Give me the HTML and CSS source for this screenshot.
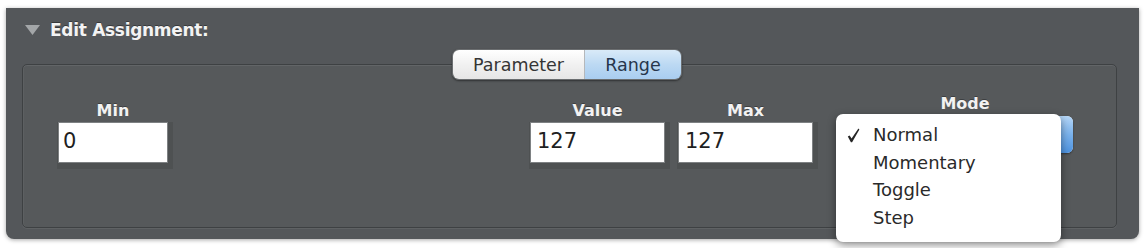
FILE: index.html
```html
<!DOCTYPE html>
<html>
<head>
<meta charset="utf-8">
<link rel="stylesheet" href="styles.css">
</head>
<body>
<div class="panel">
  <div class="header">
    <svg class="disclosure" width="15" height="10" viewBox="0 0 15 10"><path d="M0 0 H15 L7.5 10 Z" fill="#a3a6a8"/></svg>
    <span class="title">Edit Assignment:</span>
  </div>
  <div class="box">
    <div class="seg-row">
      <div class="segmented">
        <div class="seg seg-param">Parameter</div>
        <div class="seg seg-range">Range</div>
      </div>
    </div>
    <div class="fields">
      <div class="col col-min">
        <div class="label">Min</div>
        <div class="field field-min">0</div>
      </div>
      <div class="col col-value">
        <div class="label">Value</div>
        <div class="field field-wide">127</div>
      </div>
      <div class="col col-max">
        <div class="label">Max</div>
        <div class="field field-wide">127</div>
      </div>
      <div class="col col-mode">
        <div class="label">Mode</div>
        <div class="popup"><div class="popup-arrow"></div></div>
        <div class="menu">
          <div class="item"><svg class="check" width="13" height="15" viewBox="0 0 13 15"><path d="M0.8 8.6 L2.6 7.4 L4.6 10.6 L11.4 0.6 L12.4 1.4 L5.1 14.2 L3.9 14.2 Z" fill="#262626"/></svg>Normal</div>
          <div class="item">Momentary</div>
          <div class="item">Toggle</div>
          <div class="item">Step</div>
        </div>
      </div>
    </div>
  </div>
</div>
</body>
</html>
```
FILE: styles.css
```css
html, body {
  margin: 0;
  padding: 0;
  background: #ffffff;
}
body {
  font-family: "DejaVu Sans", "Liberation Sans", sans-serif;
  width: 1145px;
  height: 248px;
  overflow: hidden;
}
.panel {
  margin: 8px 6px 0 6px;
  height: 231px;
  box-sizing: border-box;
  background: #54575a;
  border-radius: 0 0 8px 8px;
  box-shadow: 0 1px 4px rgba(0,0,0,0.35);
  padding: 0 22px 0 16px;
}
.header {
  height: 44px;
  display: flex;
  align-items: center;
  padding-left: 3px;
}
.disclosure {
  display: block;
  margin-right: 10px;
}
.title {
  color: #f3f3f3;
  font-weight: bold;
  font-size: 17px;
  letter-spacing: -0.3px;
  text-shadow: 0 -1px 0 rgba(0,0,0,0.35);
}
.box {
  margin-top: 12px;
  height: 164px;
  box-sizing: border-box;
  border: 1px solid #3e4143;
  border-radius: 5px;
  background: #56595b;
  box-shadow: inset 0 1px 0 #626567, inset 1px 0 0 #5d6062, 0 1px 0 #5f6264;
}
.seg-row {
  display: flex;
  justify-content: center;
  margin-top: -16px;
  padding-right: 5px;
}
.segmented {
  display: flex;
  height: 29px;
  border-radius: 7px;
  overflow: hidden;
  border: 1px solid #6b6e70;
  box-shadow: 0 1px 2px rgba(0,0,0,0.45);
}
.seg {
  display: flex;
  align-items: center;
  justify-content: center;
  font-size: 17.5px;
  height: 100%;
}
.seg-param {
  width: 131px;
  color: #353535;
  background: linear-gradient(#ffffff, #f1f1f1 50%, #e6e6e6);
  border-right: 1px solid #b5b8bb;
}
.seg-range {
  width: 96px;
  color: #27364c;
  background: linear-gradient(#d9eaf8, #bcd9f3 50%, #a9cdf0);
}
.fields {
  display: flex;
  align-items: flex-start;
  padding-left: 35px;
  margin-top: 21px;
}
.col {
  display: flex;
  flex-direction: column;
  align-items: center;
  position: relative;
}
.label {
  color: #f2f2f2;
  font-weight: bold;
  font-size: 16px;
  line-height: 19px;
  height: 19px;
  margin-bottom: 2px;
  text-shadow: 0 -1px 0 rgba(0,0,0,0.3);
}
.field {
  box-sizing: border-box;
  height: 41px;
  background: #ffffff;
  border: 1px solid #7e8183;
  color: #1f1f1f;
  font-size: 21px;
  line-height: 36px;
  padding-left: 4px;
  align-self: stretch;
  box-shadow: 2px 3px 0 3px rgba(0,0,0,0.09);
}
.col-min { width: 110px; }
.col-value { width: 135px; margin-left: 362px; }
.col-max { width: 135px; margin-left: 13px; }
.field-wide { padding-left: 6px; }
.col-mode {
  width: 216px;
  margin-left: 44px;
  margin-top: -7px;
}
.popup {
  margin-top: 1px;
  align-self: stretch;
  height: 37px;
  border-radius: 6px;
  background: #f4f4f4;
  position: relative;
  overflow: hidden;
  box-shadow: 0 1px 2px rgba(0,0,0,0.4);
}
.popup-arrow {
  position: absolute;
  right: 0;
  top: 0;
  bottom: 0;
  width: 22px;
  background: linear-gradient(#b5d6f7, #7ab2ec 50%, #4e93e0);
}
.menu {
  position: absolute;
  left: -21px;
  top: 20px;
  width: 225px;
  height: 128px;
  box-sizing: border-box;
  background: #ffffff;
  border-radius: 7px;
  box-shadow: 0 3px 8px rgba(0,0,0,0.45);
  padding-top: 7px;
}
.item {
  position: relative;
  height: 27.5px;
  line-height: 27.5px;
  padding-left: 37px;
  font-size: 18px;
  color: #2a2a2a;
}
.check {
  position: absolute;
  left: 11px;
  top: 7px;
}
```
